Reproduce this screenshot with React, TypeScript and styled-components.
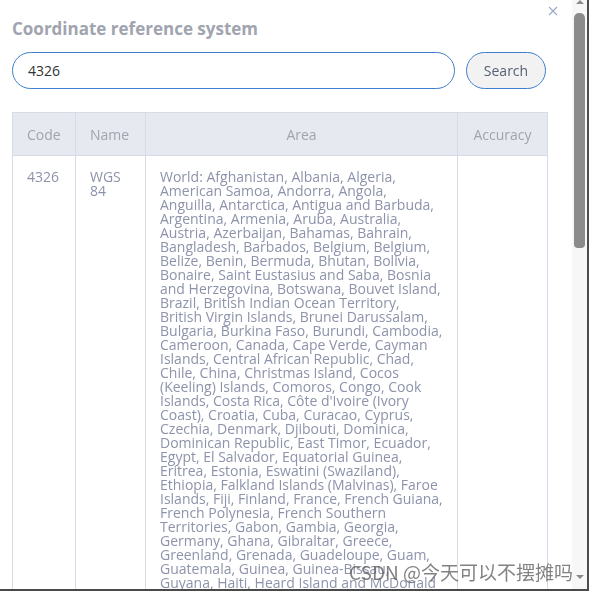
import React from 'react';
import styled, { createGlobalStyle } from 'styled-components';

const Global = createGlobalStyle`
  html, body { margin: 0; padding: 0; background: #fff; }
  body { font-family: "Open Sans", "Noto Sans CJK SC", sans-serif; }
  * { box-sizing: border-box; }
`;

const TRACK = '#f7f7f7';
const THUMB = '#8b8b8b';

const Frame = styled.div`
  width: 589px;
  height: 591px;
  border-right: 2px solid #4d4d4d;
  border-bottom: 2px solid #4a4a4a;
  display: flex;
  position: relative;
  overflow: hidden;
  background: #fff;
`;

const Scroller = styled.div`
  flex: 1;
  min-width: 0;
  height: 100%;
  overflow: hidden;
`;

const ScrollTrack = styled.div`
  width: 15px;
  flex: none;
  height: 100%;
  background: ${TRACK};
  display: flex;
  flex-direction: column;
`;

const ArrowButton = styled.div<{ $down?: boolean }>`
  flex: none;
  height: ${p => (p.$down ? 18 : 13)}px;
  display: flex;
  justify-content: center;
  align-items: flex-start;
  padding-top: ${p => (p.$down ? 4 : 0)}px;
`;

const Triangle = styled.div<{ $down?: boolean }>`
  width: 0;
  height: 0;
  border-left: 4px solid transparent;
  border-right: 4px solid transparent;
  ${p =>
    p.$down
      ? `border-top: 4px solid ${THUMB};`
      : `border-bottom: 4px solid ${THUMB};`}
`;

const ThumbArea = styled.div`
  flex: 1;
  padding: 0 2px;
`;

const Thumb = styled.div`
  height: 235px;
  background: ${THUMB};
  border-radius: 5px 5px 4px 4px;
`;

const Dialog = styled.div`
  position: relative;
  padding: 17px 26px 40px 12px;
`;

const Title = styled.h2`
  margin: 0;
  font-family: "Open Sans", sans-serif;
  font-weight: 700;
  font-size: 17px;
  line-height: 24px;
  color: #a0a4af;
`;

const CloseButton = styled.button`
  position: absolute;
  top: 5px;
  right: 13px;
  width: 12px;
  height: 12px;
  padding: 0;
  border: none;
  background: transparent;
  display: flex;
  align-items: center;
  justify-content: center;
  cursor: pointer;
`;

const SearchRow = styled.div`
  display: flex;
  align-items: center;
  gap: 11px;
  margin-top: 11px;
`;

const SearchInput = styled.input`
  flex: 1;
  height: 37px;
  border: 1px solid #3d7fcf;
  border-radius: 19px;
  padding: 0 15px;
  font-family: "Open Sans", sans-serif;
  font-size: 14px;
  color: #333;
  outline: none;
  background: #fff;
`;

const SearchButton = styled.button`
  width: 80px;
  height: 37px;
  border: 1px solid #3d7fcf;
  border-radius: 19px;
  background: #f2f2f2;
  font-family: "Open Sans", sans-serif;
  font-size: 14px;
  color: #566076;
  padding: 0;
`;

const Table = styled.table`
  margin-top: 23px;
  width: 535px;
  border-collapse: collapse;
  table-layout: fixed;
  font-family: "Open Sans", sans-serif;
  font-size: 14px;
`;

const HeadCell = styled.th<{ $align?: string; $w: number }>`
  width: ${p => p.$w}px;
  height: 43px;
  background: #e7e9f1;
  border: 1px solid #d5dce7;
  color: #a0a4ae;
  font-weight: 400;
  text-align: ${p => p.$align || 'left'};
  padding: 0 14px;
`;

const Cell = styled.td`
  border: 1px solid #d5dce7;
  border-bottom: none;
  vertical-align: top;
  padding: 14px 14px 20px 14px;
  color: #8d93aa;
  line-height: 14px;
  word-wrap: break-word;
`;

const Watermark = styled.div`
  position: absolute;
  right: 14px;
  bottom: 6px;
  font-family: "Noto Sans CJK SC", sans-serif;
  font-size: 19px;
  line-height: 22px;
  color: rgba(95, 95, 95, 0.78);
  pointer-events: none;
  white-space: nowrap;
`;

const AREA =
  "World: Afghanistan, Albania, Algeria, American Samoa, Andorra, Angola, Anguilla, Antarctica, Antigua and Barbuda, Argentina, Armenia, Aruba, Australia, Austria, Azerbaijan, Bahamas, Bahrain, Bangladesh, Barbados, Belgium, Belgium, Belize, Benin, Bermuda, Bhutan, Bolivia, Bonaire, Saint Eustasius and Saba, Bosnia and Herzegovina, Botswana, Bouvet Island, Brazil, British Indian Ocean Territory, British Virgin Islands, Brunei Darussalam, Bulgaria, Burkina Faso, Burundi, Cambodia, Cameroon, Canada, Cape Verde, Cayman Islands, Central African Republic, Chad, Chile, China, Christmas Island, Cocos (Keeling) Islands, Comoros, Congo, Cook Islands, Costa Rica, Côte d'Ivoire (Ivory Coast), Croatia, Cuba, Curacao, Cyprus, Czechia, Denmark, Djibouti, Dominica, Dominican Republic, East Timor, Ecuador, Egypt, El Salvador, Equatorial Guinea, Eritrea, Estonia, Eswatini (Swaziland), Ethiopia, Falkland Islands (Malvinas), Faroe Islands, Fiji, Finland, France, French Guiana, French Polynesia, French Southern Territories, Gabon, Gambia, Georgia, Germany, Ghana, Gibraltar, Greece, Greenland, Grenada, Guadeloupe, Guam, Guatemala, Guinea, Guinea-Bissau, Guyana, Haiti, Heard Island and McDonald Islands, Holy See (Vatican City State), Honduras, China - Hong Kong, Hungary, Iceland, India, Indonesia, Islamic Republic of Iran, Iraq, Ireland, Israel, Italy, Jamaica, Japan, Jordan, Kazakhstan, Kenya, Kiribati, Democratic People's Republic of Korea (North Korea), Republic of Korea (South Korea), Kosovo, Kuwait, Kyrgyzstan, Lao People's Democratic Republic (Laos), Latvia, Lebanon, Lesotho, Liberia, Libyan Arab Jamahiriya, Liechtenstein, Lithuania, Luxembourg, China - Macao, Madagascar, Malawi, Malaysia, Maldives, Mali, Malta, Marshall Islands, Martinique, Mauritania, Mauritius, Mayotte, Mexico, Federated States of Micronesia, Monaco, Mongolia, Montenegro, Montserrat, Morocco, Mozambique, Myanmar (Burma), Namibia, Nauru, Nepal, Netherlands, New Caledonia, New Zealand, Nicaragua, Niger, Nigeria, Niue, Norfolk Island, North Macedonia, Northern Mariana Islands, Norway, Oman, Pakistan, Palau, Panama, Papua New Guinea (PNG), Paraguay, Peru, Philippines, Pitcairn, Poland, Portugal, Puerto Rico, Qatar, Reunion, Romania, Russian Federation, Rwanda, St Barthelemy, St Kitts and Nevis, St Helena, Ascension and Tristan da Cunha, St Lucia, St Martin, St Pierre and Miquelon, Saint Vincent and the Grenadines, Samoa, San Marino, Sao Tome and Principe, Saudi Arabia, Senegal, Serbia, Seychelles, Sierra Leone, Singapore, Slovakia (Slovak Republic), Slovenia, St Maarten, Solomon Islands, Somalia, South Africa, South Georgia and the South Sandwich Islands, South Sudan, Spain, Sri Lanka, Sudan, Suriname, Svalbard and Jan Mayen, Sweden, Switzerland, Syrian Arab Republic, Taiwan, Tajikistan, Tanzania, Thailand, The Democratic Republic of the Congo (Zaire), The Gambia, Togo, Tokelau, Tonga, Trinidad and Tobago, Tunisia, Turkey, Turkmenistan, Turks and Caicos Islands, Tuvalu, Uganda, Ukraine, United Arab Emirates (UAE), United Kingdom (UK), United States (USA), United States Minor Outlying Islands, Uruguay, Uzbekistan, Vanuatu, Venezuela, Vietnam, US Virgin Islands, Wallis and Futuna, Western Sahara, Yemen, Zambia, Zimbabwe.";

export default function App() {
  return (
    <>
      <Global />
      <Frame>
        <Scroller>
          <Dialog>
            <Title>Coordinate reference system</Title>
            <CloseButton aria-label="Close">
              <svg width="10" height="10" viewBox="0 0 10 10">
                <path d="M1 1 L9 9 M9 1 L1 9" stroke="#9aaac4" strokeWidth="1.1" fill="none" />
              </svg>
            </CloseButton>
            <SearchRow>
              <SearchInput defaultValue="4326" autoFocus />
              <SearchButton>Search</SearchButton>
            </SearchRow>
            <Table>
              <thead>
                <tr>
                  <HeadCell $w={63}>Code</HeadCell>
                  <HeadCell $w={70}>Name</HeadCell>
                  <HeadCell $w={312} $align="center">Area</HeadCell>
                  <HeadCell $w={90} $align="center">Accuracy</HeadCell>
                </tr>
              </thead>
              <tbody>
                <tr>
                  <Cell>4326</Cell>
                  <Cell>WGS 84</Cell>
                  <Cell>{AREA}</Cell>
                  <Cell></Cell>
                </tr>
              </tbody>
            </Table>
          </Dialog>
        </Scroller>
        <ScrollTrack aria-hidden="true">
          <ArrowButton><Triangle /></ArrowButton>
          <ThumbArea><Thumb /></ThumbArea>
          <ArrowButton $down><Triangle $down /></ArrowButton>
        </ScrollTrack>
        <Watermark>CSDN @今天可以不摆摊吗</Watermark>
      </Frame>
    </>
  );
}
